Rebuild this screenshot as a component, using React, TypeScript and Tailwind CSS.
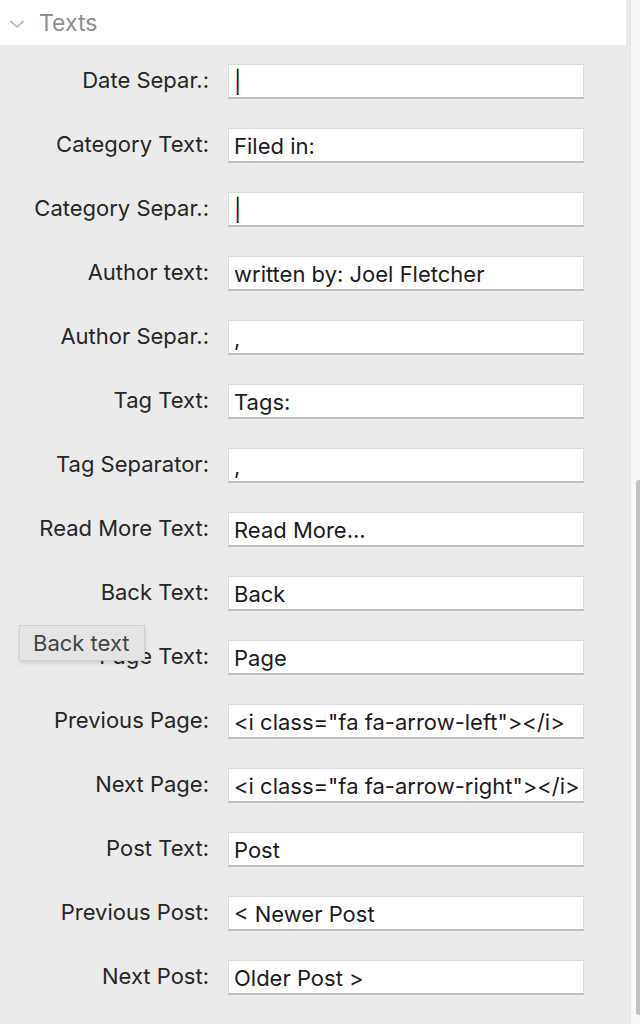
import React from "react";

const rows: [string, string][] = [
  ["Date Separ.:", "|"],
  ["Category Text:", "Filed in:"],
  ["Category Separ.:", "|"],
  ["Author text:", "written by: Joel Fletcher"],
  ["Author Separ.:", ","],
  ["Tag Text:", "Tags:"],
  ["Tag Separator:", ","],
  ["Read More Text:", "Read More..."],
  ["Back Text:", "Back"],
  ["Page Text:", "Page"],
  ["Previous Page:", '<i class="fa fa-arrow-left"></i>'],
  ["Next Page:", '<i class="fa fa-arrow-right"></i>'],
  ["Post Text:", "Post"],
  ["Previous Post:", "< Newer Post"],
  ["Next Post:", "Older Post >"],
];

export default function App() {
  return (
    <div
      className="relative flex w-[640px] h-[1024px] overflow-hidden bg-[#ebebeb]"
      style={{ fontFamily: "Inter, 'Noto Sans', sans-serif" }}
    >
      <div className="flex flex-col w-[630px] bg-[#ebebeb]">
        <div className="flex items-center h-[46px] w-[626px] bg-white">
          <svg width="16" height="10" viewBox="0 0 16 10" className="ml-[9px] mt-[2px]">
            <path d="M1.5 2 L8 8 L14.5 2" fill="none" stroke="#b3b3b3" strokeWidth="1.6" />
          </svg>
          <span className="ml-[14px] mt-[2px] text-[23px] text-[#8e8e8e] leading-none">Texts</span>
        </div>
        <div className="flex flex-col pt-[19px]">
          {rows.map(([label, value]) => (
            <div key={label} className="flex items-center h-[64px] pb-[30px]">
              <div className="w-[209px] text-right text-[22px] text-[#262626] leading-none mt-[-3px]">
                {label}
              </div>
              <div className="ml-[19px] w-[356px] h-[34px] flex items-center bg-white border border-[#d9d9d9] border-b-[#bcbcbc] shadow-[0_1px_0_#c4c4c4] px-[5px] pt-[2px] text-[22px] text-[#1c1c1c] whitespace-nowrap overflow-hidden leading-none">
                {value}
              </div>
            </div>
          ))}
        </div>
      </div>
      <div className="flex flex-col items-end w-[10px] h-full bg-[#f8f8f8] border-l border-[#e4e4e4] pt-[480px]">
        <div className="w-[6px] h-[535px] mr-[-2px] rounded-full bg-[#c2c2c2]" />
      </div>
      <div className="absolute left-[19px] top-[625px] w-[126px] h-[36px] flex items-center pl-[13px] bg-[#e4e4e4] border border-[#d0d0d0] shadow-[0_2px_4px_rgba(0,0,0,0.12)] text-[22px] text-[#444444] leading-none">
        Back text
      </div>
    </div>
  );
}
